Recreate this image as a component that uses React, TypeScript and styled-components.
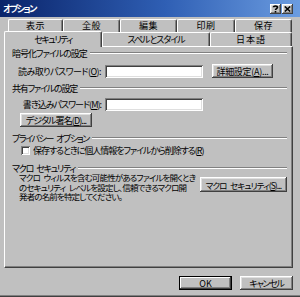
import React from "react";
import styled, { createGlobalStyle, css } from "styled-components";

const Global = createGlobalStyle`
  html, body { margin: 0; padding: 0; background: #c0c0c0; }
  body {
    width: 300px; height: 297px; overflow: hidden;
    font-family: "Noto Sans CJK JP", "Noto Sans", sans-serif;
    color: #000;
  }
  #root { width: 300px; height: 297px; }
`;

const raised = css`
  background: #c0c0c0;
  box-shadow: inset -1px -1px #404040, inset 1px 1px #ffffff,
    inset -2px -2px #808080, inset 2px 2px #dfdfdf;
`;

const sunken = css`
  background: #ffffff;
  box-shadow: inset 1px 1px #808080, inset -1px -1px #ffffff,
    inset 2px 2px #404040, inset -2px -2px #dfdfdf;
`;

const spacing = css<{ $ls?: number }>`
  letter-spacing: ${(p) => (p.$ls ?? -1)}px;
`;

const Window = styled.div`
  width: 300px;
  height: 297px;
  box-sizing: border-box;
  background: #c0c0c0;
  display: flex;
  flex-direction: column;
  font-size: 9px;
  font-feature-settings: "palt" 1;
  letter-spacing: -1px;
  word-spacing: 2.5px;
  box-shadow: inset 0 -1px #404040, inset 0 -2px #808080;
`;

const TitleBar = styled.div`
  height: 17px;
  flex: none;
  display: flex;
  align-items: center;
  padding: 0 7px 0 3px;
  background: linear-gradient(to right, #0a246a 0%, #2f5fb4 55%, #6b9ce0 100%);
  color: #ffffff;
`;

const TitleText = styled.span`
  flex: 1;
  font-weight: bold;
  letter-spacing: -1.6px;
  line-height: 17px;
`;

const CaptionButton = styled.div<{ $gap?: number }>`
  ${raised};
  width: 11px;
  height: 10px;
  margin-left: ${(p) => p.$gap ?? 0}px;
  display: flex;
  align-items: center;
  justify-content: center;
`;

const Body = styled.div`
  flex: 1;
  display: flex;
  flex-direction: column;
  padding: 2px 7px 0 4px;
`;

const TabStrip = styled.div`
  display: flex;
  flex-direction: column;
`;

const TabRow = styled.div<{ $offset: number }>`
  display: flex;
  padding-left: ${(p) => p.$offset}px;
  height: ${(p) => (p.$offset ? 13 : 14)}px;
  align-items: flex-end;
`;

const Tab = styled.div<{ $w: number; $active?: boolean; $ls?: number }>`
  ${spacing};
  width: ${(p) => p.$w}px;
  height: 100%;
  box-sizing: border-box;
  border-top: 1px solid #ffffff;
  border-left: 1px solid #ffffff;
  border-right: 1px solid #404040;
  border-top-left-radius: 2px;
  border-top-right-radius: 2px;
  box-shadow: inset -1px 0 #808080;
  background: #c0c0c0;
  display: flex;
  align-items: center;
  justify-content: center;
  line-height: 12px;
  white-space: nowrap;
  ${(p) =>
    p.$active &&
    css`
      position: relative;
      z-index: 1;
      height: 16px;
      margin-bottom: -1px;
      margin-top: -1px;
    `}
`;

const Panel = styled.div`
  height: 222px;
  box-sizing: border-box;
  border-top: 1px solid #ffffff;
  border-left: 1px solid #ffffff;
  border-right: 1px solid #404040;
  border-bottom: 1px solid #404040;
  box-shadow: inset -1px -1px #808080;
  display: flex;
  flex-direction: column;
  padding: 0 5px 0 7px;
`;

const GroupHeader = styled.div<{ $top: number; $ls?: number }>`
  ${spacing};
  display: flex;
  align-items: center;
  height: 12px;
  margin-top: ${(p) => p.$top}px;
  white-space: nowrap;
  &::after {
    content: "";
    flex: 1;
    margin-left: 3px;
    height: 0;
    border-top: 1px solid #808080;
    border-bottom: 1px solid #ffffff;
  }
`;

const FieldRow = styled.div<{ $top: number }>`
  display: flex;
  align-items: center;
  height: 14px;
  margin-top: ${(p) => p.$top}px;
  padding-left: 6px;
`;

const FieldLabel = styled.span<{ $ls?: number }>`
  ${spacing};
  width: 87px;
  padding-right: 4px;
  box-sizing: border-box;
  text-align: right;
  white-space: nowrap;
`;

const TextBox = styled.div`
  ${sunken};
  width: 98px;
  height: 13px;
`;

const PushButton = styled.div<{
  $w: number;
  $h?: number;
  $left?: number;
  $top?: number;
  $ls?: number;
  $small?: boolean;
}>`
  ${raised};
  ${spacing};
  width: ${(p) => p.$w}px;
  height: ${(p) => p.$h ?? 14}px;
  margin-left: ${(p) => p.$left ?? 0}px;
  margin-top: ${(p) => p.$top ?? 0}px;
  font-size: ${(p) => (p.$small ? 8.5 : 9)}px;
  flex: none;
  box-sizing: border-box;
  display: flex;
  align-items: center;
  justify-content: center;
  white-space: nowrap;
`;

const DefaultButton = styled(PushButton)`
  box-shadow: inset 0 0 0 1px #000000, inset -2px -2px #404040,
    inset 2px 2px #ffffff, inset -3px -3px #808080;
`;

const CheckRow = styled.div`
  display: flex;
  align-items: center;
  height: 12px;
  padding-left: 9px;
  white-space: nowrap;
  letter-spacing: -1.05px;
`;

const CheckBox = styled.div`
  ${sunken};
  width: 9px;
  height: 9px;
  margin-right: 3px;
  flex: none;
`;

const MacroRow = styled.div`
  display: flex;
  align-items: flex-start;
  padding-left: 7px;
  margin-top: -1px;
`;

const MacroText = styled.p`
  margin: 0;
  width: 181px;
  flex: none;
  font-size: 8.5px;
  letter-spacing: -0.85px;
  line-height: 9.6px;
  white-space: nowrap;
`;

const Footer = styled.div`
  display: flex;
  justify-content: flex-end;
  gap: 8px;
  margin-top: 8px;
`;

const Question = () => (
  <svg width="7" height="8" viewBox="0 0 7 8">
    <path
      d="M1.5 2.2 C1.5 0.6 5.5 0.6 5.5 2.2 C5.5 3.6 3.5 3.6 3.5 5"
      stroke="#000"
      strokeWidth="1.6"
      fill="none"
    />
    <rect x="2.7" y="6" width="1.6" height="1.6" fill="#000" />
  </svg>
);

const CloseX = () => (
  <svg width="7" height="6" viewBox="0 0 7 6">
    <path d="M0.8 0.5 L6.2 5.5 M6.2 0.5 L0.8 5.5" stroke="#000" strokeWidth="1.5" />
  </svg>
);

export default function App() {
  return (
    <>
      <Global />
      <Window>
        <TitleBar>
          <TitleText>オプション</TitleText>
          <CaptionButton>
            <Question />
          </CaptionButton>
          <CaptionButton $gap={1}>
            <CloseX />
          </CaptionButton>
        </TitleBar>
        <Body>
          <TabStrip>
            <TabRow $offset={4}>
              <Tab $w={55} $ls={0.5}>表示</Tab>
              <Tab $w={57} $ls={0.5}>全般</Tab>
              <Tab $w={57} $ls={0.5}>編集</Tab>
              <Tab $w={58} $ls={0.5}>印刷</Tab>
              <Tab $w={57} $ls={0.5}>保存</Tab>
            </TabRow>
            <TabRow $offset={0}>
              <Tab $w={98} $active $ls={-1.5}>
                セキュリティ
              </Tab>
              <Tab $w={108} $ls={-1}>
                スペルとスタイル
              </Tab>
              <Tab $w={82} $ls={1}>
                日本語
              </Tab>
            </TabRow>
          </TabStrip>
          <Panel>
            <GroupHeader $top={0}>暗号化ファイルの設定</GroupHeader>
            <FieldRow $top={5}>
              <FieldLabel $ls={-0.55}>
                読み取りパスワード(<u>O</u>):
              </FieldLabel>
              <TextBox />
              <PushButton $w={61} $left={9} $ls={-0.3}>
                詳細設定(<u>A</u>)...
              </PushButton>
            </FieldRow>
            <GroupHeader $top={4} $ls={-1.2}>
              共有ファイルの設定
            </GroupHeader>
            <FieldRow $top={3}>
              <FieldLabel $ls={-1}>
                書き込みパスワード(<u>M</u>):
              </FieldLabel>
              <TextBox />
            </FieldRow>
            <PushButton $w={72} $left={8} $top={2} $ls={-0.9}>
              デジタル署名(<u>D</u>)...
            </PushButton>
            <GroupHeader $top={5} $ls={-1.4}>
              プライバシー オプション
            </GroupHeader>
            <CheckRow>
              <CheckBox />
              保存するときに個人情報をファイルから削除する(<u>R</u>)
            </CheckRow>
            <GroupHeader $top={6} $ls={-1.3}>
              マクロ セキュリティ
            </GroupHeader>
            <MacroRow>
              <MacroText>
                マクロ ウィルスを含む可能性があるファイルを開くとき
                <br />
                のセキュリティ レベルを設定し、信頼できるマクロ開
                <br />
                発者の名前を特定してください。
              </MacroText>
              <PushButton $w={87} $h={15} $top={4} $small $ls={-0.9}>
                マクロ セキュリティ(<u>S</u>)...
              </PushButton>
            </MacroRow>
          </Panel>
          <Footer>
            <DefaultButton $w={53} $ls={0}>
              OK
            </DefaultButton>
            <PushButton $w={53} $ls={-1.3}>
              キャンセル
            </PushButton>
          </Footer>
        </Body>
      </Window>
    </>
  );
}
